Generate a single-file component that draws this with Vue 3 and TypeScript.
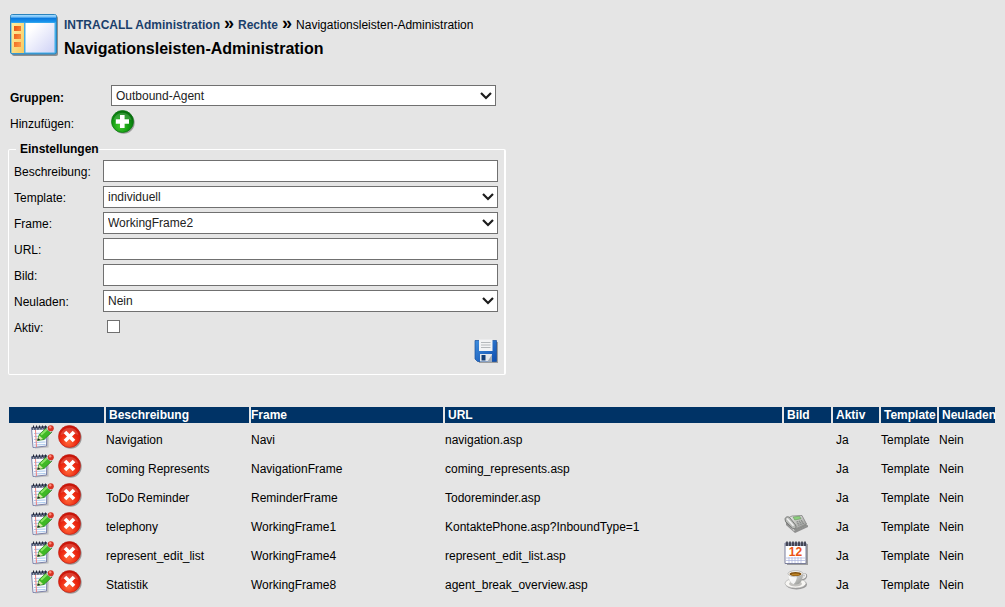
<script setup lang="ts">
import { ref } from 'vue'

interface NavEntry {
  name: string
  frame: string
  url: string
  image: '' | 'phone' | 'calendar' | 'cup'
}

const group = ref('Outbound-Agent')
const description = ref('')
const template = ref('individuell')
const frame = ref('WorkingFrame2')
const url = ref('')
const image = ref('')
const reload = ref('Nein')
const active = ref(false)

const entries: NavEntry[] = [
  { name: 'Navigation', frame: 'Navi', url: 'navigation.asp', image: '' },
  { name: 'coming Represents', frame: 'NavigationFrame', url: 'coming_represents.asp', image: '' },
  { name: 'ToDo Reminder', frame: 'ReminderFrame', url: 'Todoreminder.asp', image: '' },
  { name: 'telephony', frame: 'WorkingFrame1', url: 'KontaktePhone.asp?InboundType=1', image: 'phone' },
  { name: 'represent_edit_list', frame: 'WorkingFrame4', url: 'represent_edit_list.asp', image: 'calendar' },
  { name: 'Statistik', frame: 'WorkingFrame8', url: 'agent_break_overview.asp', image: 'cup' },
]
</script>

<template>
  <svg class="defs" width="0" height="0" aria-hidden="true">
    <defs>
      <linearGradient id="bar" x1="0" y1="0" x2="0" y2="1">
        <stop offset="0" stop-color="#a5dcff" /><stop offset=".3" stop-color="#6fbcf6" /><stop offset=".4" stop-color="#0876dc" /><stop offset="1" stop-color="#1c9af0" />
      </linearGradient>
      <linearGradient id="side" x1="0" y1="0" x2="1" y2="1">
        <stop offset="0" stop-color="#fff0a0" /><stop offset="1" stop-color="#f8c860" />
      </linearGradient>
      <linearGradient id="pane" x1="0" y1="0" x2="1" y2="1">
        <stop offset=".2" stop-color="#ffffff" /><stop offset="1" stop-color="#cfd2f6" />
      </linearGradient>
      <linearGradient id="orange" x1="0" y1="0" x2="1" y2="1">
        <stop offset="0" stop-color="#e85510" /><stop offset="1" stop-color="#ff9a48" />
      </linearGradient>
      <radialGradient id="green" cx=".4" cy=".7" r=".7">
        <stop offset="0" stop-color="#45cb2e" /><stop offset=".55" stop-color="#129c12" /><stop offset="1" stop-color="#066b0d" />
      </radialGradient>
      <radialGradient id="red" cx=".45" cy=".75" r=".75">
        <stop offset="0" stop-color="#ff6a3a" /><stop offset=".5" stop-color="#ee2a12" /><stop offset="1" stop-color="#c41208" />
      </radialGradient>
      <linearGradient id="blue" x1="0" y1="0" x2="1" y2="1">
        <stop offset="0" stop-color="#3f8ede" /><stop offset="1" stop-color="#0f4eae" />
      </linearGradient>
      <linearGradient id="grey" x1="0" y1="0" x2="1" y2="1">
        <stop offset="0" stop-color="#f4f4f2" /><stop offset="1" stop-color="#8d8f8c" />
      </linearGradient>
    </defs>
    <symbol id="i-edit" viewBox="0 0 24 24">
      <path d="M4 4 19 3 18.500 22.500 5 23.500Z" fill="#777" opacity=".35" />
      <path d="M1.500 3 17 2 16.500 21 3 22.500Z" fill="#fafcff" stroke="#7d83aa" />
      <path d="M4 8.500 16 8M4 11.500 16 11M4 14.500 16 14M4 17.500 15.500 17M4 20 15.500 19.500" stroke="#a9c8ec" />
      <path d="M5.500 5 6.500 22" stroke="#f08080" />
      <path d="M1.500 2 17 1 16.500 4.500 2 5Z" fill="#4e5872" />
      <path d="M3.500 .5v4M6.500 .5v4M9.500 .5v4M12.500 .5v4M15.500 .5v4" stroke="#25283a" />
      <path d="M3.500 3v2M6.500 3v2M9.500 3v2M12.500 3v2" stroke="#c3c8d6" stroke-width=".7" />
      <path d="M7.500 15.500 9.300 9.500 16.500 2.800 21.800 7.200 14 14.500Z" fill="#3fb925" stroke="#26831a" stroke-width=".8" />
      <path d="m11 9.800 6-5.600" stroke="#8be565" stroke-width="2" />
      <path d="M7.700 15.500 9.300 10.500 13 14Z" fill="#d5e8a4" /><path d="m7.500 15.700.8-2.500 2 1.600Z" fill="#222" />
      <path d="m16 3.800 2.500-2.300 4.500 4-2.300 2Z" fill="#d9e2e4" stroke="#778" stroke-width=".5" />
      <circle cx="20.800" cy="3.300" r="3" fill="#d83425" /><circle cx="20.200" cy="2.300" r="1.200" fill="#ff9080" />
    </symbol>
    <symbol id="i-delete" viewBox="0 0 24 24">
      <circle cx="12.700" cy="12.700" r="11" fill="#555" opacity=".5" />
      <circle cx="11.500" cy="11.500" r="11" fill="url(#red)" stroke="#b81a10" stroke-width=".6" />
      <path d="M2.500 10a9.200 9.200 0 0 1 18 0C14 7.500 9 7.500 2.500 10Z" fill="#fff" opacity=".16" />
      <path d="M7 7 16 16M16 7 7 16" stroke="#fff" stroke-width="3.600" />
    </symbol>
    <symbol id="i-add" viewBox="0 0 24 24">
      <circle cx="12.700" cy="12.700" r="11" fill="#555" opacity=".5" />
      <circle cx="11.500" cy="11.500" r="11" fill="url(#green)" stroke="#08720e" stroke-width=".7" />
      <path d="M2.500 10a9.200 9.200 0 0 1 18 0C14 7.500 9 7.500 2.500 10Z" fill="#fff" opacity=".16" />
      <path d="M9 5h4.600v4.200H18v4.600h-4.400V18H9v-4.200H4.800V9.200H9Z" fill="#fff" />
    </symbol>
    <symbol id="i-save" viewBox="0 0 24 24">
      <path d="M3 3h21v21H5Z" fill="#444" opacity=".45" />
      <path d="M1 1.500h21.500V22.500H3.500L1 20Z" fill="url(#blue)" stroke="#164e9c" stroke-width=".7" />
      <path d="M5 .5h13.500v11.500H5Z" fill="#f2f3f4" /><path d="M7 3.500h9.500M7 6h9.500M7 8.500h9.500" stroke="#b4b8bb" />
      <path d="M6 15h12v7.500H6Z" fill="#e4e7eb" /><path d="M7.500 16h4v5.500h-4Z" fill="#123e78" /><path d="m13.500 22.500 4.500-7v7Z" fill="#a5adb6" />
    </symbol>
    <symbol id="i-phone" viewBox="0 0 24 24">
      <path d="m2 10 8 9 14-6v2L11 21 2 13Z" fill="#555" opacity=".6" />
      <path d="M2 7 8 4 18 3.500 22.500 12 10.500 17.500 2 10.500Z" fill="url(#grey)" stroke="#777" stroke-width=".7" />
      <path d="m22.500 12-12 5.500v1.700l12.500-5.500Z" fill="#8b8d8a" />
      <path d="m9 5 6.500-.8 1.500 2.500-6.200 1.300Z" fill="#8bd07c" stroke="#5f8a56" stroke-width=".5" />
      <path d="M1 7C1.500 4.500 4.500 4 6 6l5.500 7c1.500 3-.5 4.500-3 3.300L1.500 9.500Z" fill="#b9bbb8" stroke="#666866" stroke-width=".8" />
      <path d="m3 6.500 6.500 7.200" stroke="#f0f0f0" stroke-width="1.600" />
      <path d="m12.500 10 5.500-1.400m-4.700 3 5.700-1.700m-4.900 3.300 5.900-2" stroke="#858886" stroke-width="1.100" stroke-dasharray="1.500 .8" />
    </symbol>
    <symbol id="i-calendar" viewBox="0 0 24 24">
      <path d="M3 3h21v21H3Z" fill="#555" opacity=".5" />
      <path d="M1 2h21v20.500H1Z" fill="#fff" stroke="#7b7f9c" />
      <path d="M1 2h21v3H1Z" fill="#888da0" />
      <path d="M3 .5v4.500M6 .5v4.500M9 .5v4.500M12 .5v4.500M15 .5v4.500M18 .5v4.500M21 .5v4.500" stroke="#272936" stroke-width="1.400" />
      <path d="M2 17h19M2 19.500h19M5 16v6M8 16v6M11 16v6M14 16v6M17 16v6" stroke="#a9b2dc" stroke-width=".7" />
    </symbol>
    <symbol id="i-cup" viewBox="0 0 24 24">
      <ellipse cx="12.500" cy="14.500" rx="10.500" ry="5" fill="#666" opacity=".6" />
      <ellipse cx="11.500" cy="13.300" rx="10.500" ry="4.800" fill="#f7f6f3" stroke="#aaa" stroke-width=".6" />
      <ellipse cx="11.500" cy="13.800" rx="6.500" ry="2.600" fill="#c3c2bf" />
      <path d="M18.500 4.500c5-1.500 5 4-1 5" fill="none" stroke="#999" stroke-width="2.200" /><path d="M18.500 4.200c4-1 4.500 3.500-1 4.500" fill="none" stroke="#f3f3f3" stroke-width="1.200" />
      <path d="M4 3.500c0 6 2 11 7.500 11S19 9.500 19 3.500Z" fill="url(#grey)" />
      <path d="M4.500 5c.5 5 2 8 5 9.300C12 12 13 9 13 5Z" fill="#fff" opacity=".85" />
      <ellipse cx="11.500" cy="3.700" rx="7.500" ry="3" fill="#faf9f6" stroke="#999" stroke-width=".6" />
      <ellipse cx="11.500" cy="4" rx="6" ry="2" fill="#80500e" /><ellipse cx="11.500" cy="4.600" rx="4" ry="1" fill="#bd8427" />
    </symbol>
    <symbol id="i-chevron" viewBox="0 0 12 8">
      <path d="m1 1 5 5 5-5" fill="none" stroke="#1c1c1c" stroke-width="2.200" />
    </symbol>
  </svg>

  <main class="page">
    <header class="head">
      <svg class="logo" viewBox="0 0 48 42" aria-hidden="true">
        <rect x="2" y="2" width="46" height="40" rx="2" fill="#555" opacity=".6" />
        <rect x=".5" y=".5" width="46" height="39.500" rx="2" fill="#43aee8" stroke="#2a83bd" />
        <rect x="1" y="1" width="45" height="7.500" rx="1" fill="url(#bar)" />
        <path d="M1.500 9h12.500v30H1.500Z" fill="url(#side)" />
        <path d="M15.500 9h29v29.500h-29Z" fill="url(#pane)" />
        <path d="M4 12h7v5H4ZM4 20h7v5H4ZM4 28h7v5H4Z" fill="url(#orange)" />
      </svg>
      <div>
        <nav class="crumbs" aria-label="Pfad">
          <a href="#">INTRACALL Administration</a>
          <span class="sep">»</span>
          <a href="#">Rechte</a>
          <span class="sep">»</span>
          <span>Navigationsleisten-Administration</span>
        </nav>
        <h1>Navigationsleisten-Administration</h1>
      </div>
    </header>

    <form @submit.prevent>
      <div class="top">
        <label class="strong" for="group">Gruppen:</label>
        <div class="pick">
          <select id="group" v-model="group"><option>Outbound-Agent</option></select>
          <svg><use href="#i-chevron" /></svg>
        </div>
        <label for="add">Hinzufügen:</label>
        <button id="add" class="icon" type="button" title="Hinzufügen"><svg><use href="#i-add" /></svg></button>
      </div>

      <fieldset>
        <legend>Einstellungen</legend>
        <div class="fields">
          <label for="description">Beschreibung:</label>
          <input id="description" v-model="description" type="text" />
          <label for="template">Template:</label>
          <div class="pick">
            <select id="template" v-model="template"><option>individuell</option></select>
            <svg><use href="#i-chevron" /></svg>
          </div>
          <label for="frame">Frame:</label>
          <div class="pick">
            <select id="frame" v-model="frame"><option>WorkingFrame2</option></select>
            <svg><use href="#i-chevron" /></svg>
          </div>
          <label for="url">URL:</label>
          <input id="url" v-model="url" type="text" />
          <label for="image">Bild:</label>
          <input id="image" v-model="image" type="text" />
          <label for="reload">Neuladen:</label>
          <div class="pick">
            <select id="reload" v-model="reload"><option>Nein</option><option>Ja</option></select>
            <svg><use href="#i-chevron" /></svg>
          </div>
          <label for="active">Aktiv:</label>
          <input id="active" v-model="active" type="checkbox" />
        </div>
        <div class="actions">
          <button class="icon" type="submit" title="Speichern"><svg><use href="#i-save" /></svg></button>
        </div>
      </fieldset>
    </form>

    <table>
      <colgroup>
        <col class="c-tools" /><col class="c-name" /><col class="c-frame" /><col />
        <col class="c-image" /><col class="c-active" /><col class="c-end" /><col class="c-end" />
      </colgroup>
      <thead>
        <tr>
          <th></th><th>Beschreibung</th><th class="flush">Frame</th><th>URL</th>
          <th>Bild</th><th>Aktiv</th><th>Template</th><th>Neuladen</th>
        </tr>
      </thead>
      <tbody>
        <tr v-for="entry in entries" :key="entry.name">
          <td class="tools">
            <button class="icon" type="button" title="Bearbeiten"><svg><use href="#i-edit" /></svg></button>
            <button class="icon" type="button" title="Löschen"><svg><use href="#i-delete" /></svg></button>
          </td>
          <td>{{ entry.name }}</td>
          <td>{{ entry.frame }}</td>
          <td>{{ entry.url }}</td>
          <td class="picture">
            <svg v-if="entry.image" viewBox="0 0 24 24">
              <use :href="'#i-' + entry.image" width="24" height="24" />
              <text v-if="entry.image === 'calendar'" x="11.500" y="15" text-anchor="middle">12</text>
            </svg>
          </td>
          <td class="active">Ja</td>
          <td>Template</td>
          <td>Nein</td>
        </tr>
      </tbody>
    </table>
  </main>
</template>

<style>
html,
body {
  margin: 0;
  background: #e5e5e5;
}
</style>

<style scoped>
.defs {
  position: absolute;
}
.page {
  padding: 14px 8px 0 7px;
  font: 12px/16px "Liberation Sans", Arial, sans-serif;
  color: #000;
}
.head {
  display: flex;
  gap: 6px;
  padding-left: 3px;
}
.logo {
  width: 48px;
  height: 42px;
  flex: none;
}
.crumbs {
  display: flex;
  align-items: center;
  gap: 4px;
  height: 22px;
  white-space: nowrap;
}
.crumbs a {
  color: #1b3f6b;
  font-weight: bold;
  text-decoration: none;
}
.sep {
  padding-bottom: 4px;
  font-size: 18px;
  font-weight: bold;
}
h1 {
  margin: 0;
  font-size: 16px;
  line-height: 26px;
}
form {
  padding-left: 1px;
}
.top {
  display: grid;
  grid-template-columns: 101px 385px;
  row-gap: 4px;
  align-items: center;
  margin-top: 23px;
  padding-left: 2px;
}
.top label {
  padding-top: 4px;
}
.strong,
legend {
  font-weight: bold;
}
.pick {
  display: grid;
  align-items: center;
}
.pick > * {
  grid-area: 1 / 1;
}
.pick svg {
  width: 12px;
  height: 8px;
  margin-right: 4px;
  justify-self: end;
  pointer-events: none;
}
select,
input[type="text"] {
  box-sizing: border-box;
  width: 100%;
  height: 22px;
  margin: 0;
  padding: 0 4px;
  border: 1px solid #707070;
  border-radius: 0;
  background: #fff;
  color: #222;
  font: inherit;
  appearance: none;
}
.top select {
  height: 21px;
}
.icon {
  display: block;
  width: 24px;
  height: 24px;
  padding: 0;
  border: 0;
  background: none;
}
.icon svg,
.picture svg {
  display: block;
  width: 24px;
  height: 24px;
}
.picture text {
  fill: #ec5314;
  font-size: 12px;
  font-weight: bold;
}
fieldset {
  box-sizing: border-box;
  width: 498px;
  margin: 7px 0 0;
  padding: 3px 6px 11px 5px;
  border: 1px solid #fff;
  border-right-width: 2px;
  border-radius: 2px;
}
legend {
  margin-left: 2px;
  padding: 0 0 0 4px;
}
.fields {
  display: grid;
  grid-template-columns: 89px 1fr;
  row-gap: 4px;
  align-items: center;
}
.fields label {
  padding-top: 2px;
}
input[type="checkbox"] {
  width: 13px;
  height: 13px;
  margin: 4px;
  border: 1px solid #707070;
  background: #fff;
  appearance: none;
}
input[type="checkbox"]:checked {
  background: #003366;
}
.actions {
  display: flex;
  justify-content: flex-end;
  padding-top: 2px;
}
table {
  width: 100%;
  margin-top: 30px;
  table-layout: fixed;
  border-spacing: 2px;
}
.c-tools { width: 95px; }
.c-name { width: 143px; }
.c-frame { width: 192px; }
.c-image { width: 47px; }
.c-active { width: 46px; }
.c-end { width: 56px; }
th {
  height: 16px;
  padding: 0 0 0 3px;
  background: #003366;
  color: #fff;
  text-align: left;
  white-space: nowrap;
}
th.flush {
  padding-left: 0;
}
td {
  height: 24px;
  padding: 3px 0 0;
  white-space: nowrap;
}
.tools {
  display: flex;
  gap: 4px;
  padding: 0 0 3px 21px;
}
.picture {
  padding: 0 0 3px;
}
.active {
  padding-left: 3px;
}
</style>
